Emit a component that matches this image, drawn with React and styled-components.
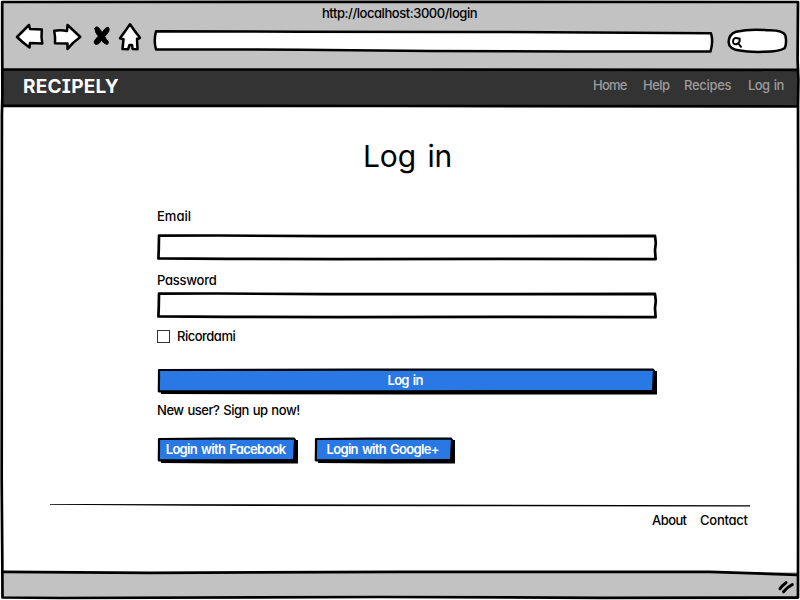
import React from "react";
import styled, { createGlobalStyle } from "styled-components";

const GlobalStyle = createGlobalStyle`
  *, *::before { box-sizing: border-box; }
  body { margin: 0; background: #fff; }
  button, input { font: inherit; letter-spacing: inherit; font-feature-settings: inherit; }
`;

const Window = styled.div`
  position: relative;
  display: flex;
  flex-direction: column;
  width: 800px;
  height: 600px;
  padding: 3px;
  overflow: hidden;
  background: #fff;
  color: #000;
  font: 450 13px/16px Inter, "Liberation Sans", sans-serif;
  font-feature-settings: "cv11", "ss03";
`;

const Drawing = styled.svg`
  position: absolute;
  inset: 0;
  width: 100%;
  height: 100%;
  overflow: visible;
  pointer-events: none;
  fill: ${(p) => p.$fill || "none"};
  stroke: #000;
  stroke-width: ${(p) => p.$weight || 2.7};
  stroke-linejoin: round;
  stroke-linecap: round;
`;

const Text = styled.span`
  position: relative;
  white-space: nowrap;
  letter-spacing: ${(p) => p.$track || 0}px;
  word-spacing: ${(p) => p.$words || 0}px;
  margin-right: ${(p) => -(p.$track || 0)}px;
`;

const Chrome = styled.header`
  display: flex;
  flex-direction: column;
  flex: 0 0 66px;
  background: #c2c2c2;
`;

const Address = styled.div`
  height: 20px;
  padding: 2px 0 0 319px;
`;

const Toolbar = styled.div`
  display: flex;
  align-items: flex-start;
  padding-left: 12px;
`;

const Icon = styled.svg`
  display: block;
  flex: none;
  width: ${(p) => p.$w}px;
  height: ${(p) => p.$h || 30}px;
  margin-left: ${(p) => p.$gap || 0}px;
  overflow: visible;
  fill: #fff;
  stroke: #000;
  stroke-width: 2.5;
  stroke-linejoin: round;
  stroke-linecap: round;
`;

const Nav = styled.nav`
  position: relative;
  display: flex;
  justify-content: space-between;
  flex: 0 0 38px;
  padding: 8px 13px 0 20px;
  background: #333;
`;

const Brand = styled.div`
  font-size: 19px;
  line-height: 20px;
  font-weight: 700;
  color: #fff;
  font-feature-settings: "cv08";
`;

const NavLinks = styled.div`
  display: flex;
  color: #9c9c9c;
  font-weight: 500;
`;

const NavLink = styled.a`
  width: ${(p) => p.$w}px;
  white-space: nowrap;
`;

const Page = styled.main`
  flex: 1;
  padding: 29px 47px 0;
`;

const Heading = styled.h1`
  margin: 0 0 32px 313px;
  font-size: 30px;
  line-height: 40px;
  font-weight: 400;
`;

const Form = styled.form`
  display: flex;
  flex-direction: column;
  width: 500px;
  margin-left: 107px;
`;

const Field = styled.label`
  display: flex;
  flex-direction: column;
  gap: ${(p) => p.$gap}px;
  margin-bottom: ${(p) => p.$after}px;
`;

const InputBox = styled.div`
  position: relative;
  height: 26px;
`;

const Input = styled.input`
  position: relative;
  width: 100%;
  height: 100%;
  padding: 0 8px;
  border: 0;
  background: transparent;
  outline: none;
`;

const Remember = styled.label`
  display: flex;
  align-items: center;
  gap: 7px;
  height: 16px;
  margin-bottom: 24px;
`;

const Checkbox = styled.input`
  appearance: none;
  width: 13px;
  height: 13px;
  margin: 0;
  border: 1px solid #333;
  background: #fff;
`;

const Button = styled.button`
  position: relative;
  width: ${(p) => p.$w}px;
  height: 26px;
  padding: 0 3px 2px 0;
  border: 0;
  background: transparent;
  color: #fff;
  font-weight: 600;
  line-height: 16px;
`;

const Signup = styled.p`
  margin: 8px 0 19px;
`;

const Socials = styled.div`
  display: flex;
  gap: 16px;
`;

const Rule = styled.div`
  position: relative;
  height: 3px;
  margin-top: 41px;
`;

const Footer = styled.footer`
  display: flex;
  justify-content: flex-end;
  gap: 13px;
  padding: 5px 2px 0 0;
`;

const StatusBar = styled.div`
  display: flex;
  justify-content: flex-end;
  flex: 0 0 25px;
  background: #c2c2c2;
`;

function InputFrame() {
  return (
    <Drawing $fill="#fff" viewBox="0 0 500 26">
      <path d="M2 1.6 L60 1.5 L170 2.2 L340 2.1 L498 1.9 L498.8 9 L498 16 L498.6 25.1 L340 24.8 L180 25.2 L70 24.8 L1.4 24.4 L1.8 14 Z" />
    </Drawing>
  );
}

function SketchButton({ width, children }) {
  const r = width - 3;
  return (
    <Button type="button" $w={width}>
      <Drawing $weight={2.2} viewBox={`0 0 ${width} 26`}>
        <path fill="#000" stroke="none" d={`M4 3 H${width} V26.4 H${width * 0.5} L4 26 Z`} />
        <path fill="#2a78e4" d={`M2 2 L${width * 0.4} 1.6 L${r - 1} 1.5 L${r} 3 L${r - 1} 22.9 L${width * 0.5} 23.4 L1.8 23.3 L2 10 Z`} />
      </Drawing>
      <Text $track={-0.7} $words={1.5}>{children}</Text>
    </Button>
  );
}

export default function App() {
  return (
    <>
      <GlobalStyle />
      <Window>
        <Chrome>
          <Address><Text $track={-0.45}>http://localhost:3000/login</Text></Address>
          <Toolbar>
            <Icon $w={30} viewBox="15 23 30 30">
              <path d="M17 37 Q23 31 29 25 L30 29 L41.8 29.5 Q41 37 42.3 43.5 Q36 43 30 43 L29.5 47.5 Q22 42 17 37Z" />
            </Icon>
            <Icon $w={30} $gap={7} viewBox="52 23 30 30">
              <path d="M54.2 30.8 Q61 29.8 67 31 L67.5 25 Q74 31 80.3 37 Q73 42 67.5 49 L67.5 43.5 L55 43.3 Q55.5 37 54.2 30.8Z" />
            </Icon>
            <Icon $w={20} $gap={9} viewBox="91 23 20 30">
              <path fill="#000" strokeWidth="0.8" d="M94.8 28.5 Q95.5 25.8 98.5 27.5 Q100.5 29.5 102 32.5 Q105 27.5 108 27 Q110 28.3 109 31 Q107 34.5 104.8 36.5 Q106 39.5 108 41 Q109.4 43.5 107 44.5 Q104 44 101.5 40.5 Q99 44.5 96 44.7 Q93.5 43.5 94.3 41 Q96 38 98.3 36.3 Q94.5 32 94.8 28.5Z" />
            </Icon>
            <Icon $w={26} $gap={6} viewBox="117 23 26 30">
              <path d="M130 24.3 Q134.5 31 140 37.8 L138 38.9 L137 38.8 L137.5 49.3 L132.7 49 L132 45 L129.5 45 L128 49.3 L122.5 49 L123.5 39.3 L120 38.3 Q125.5 31 130 24.3Z" />
            </Icon>
            <Icon $w={560} $gap={10} viewBox="153 23 560 30">
              <path d="M156 31.3 L300 31.7 L480 32 L590 32.4 L711 33.3 Q713.5 41 710.5 51.5 L570 51.4 L430 51 L300 49.7 L156 49.4 Q153.5 41 156 31.3Z" />
            </Icon>
            <Icon $w={60} $gap={14} viewBox="727 23 60 30">
              <path d="M736 31.7 Q750 28.7 767 30.2 Q784 29.7 785.5 36 Q787 44 784.5 48.3 Q779 51.8 764 51.8 Q748 52.2 740 50.6 Q728.8 49.3 728.6 42 Q729 34 736 31.7Z" />
              <path fill="none" strokeWidth="2" d="M739 38.7 Q734.5 36.6 733.2 40 Q732.2 44.4 736.5 44.3 Q740.3 42.8 739.6 38.5 M738.8 44 L741 46.8" />
            </Icon>
          </Toolbar>
        </Chrome>
        <Nav>
          <Brand><Text $track={0.25}>RECIPELY</Text></Brand>
          <NavLinks>
            <NavLink $w={50}><Text $track={-0.8}>Home</Text></NavLink>
            <NavLink $w={41}><Text $track={-0.5}>Help</Text></NavLink>
            <NavLink $w={64}><Text $track={-0.3}>Recipes</Text></NavLink>
            <NavLink $w={36}><Text $track={-0.55} $words={1.2}>Log in</Text></NavLink>
          </NavLinks>
        </Nav>
        <Page>
          <Heading><Text $track={-0.1} $words={3}>Log in</Text></Heading>
          <Form>
            <Field $gap={10} $after={12}>
              <Text>Email</Text>
              <InputBox><InputFrame /><Input type="text" /></InputBox>
            </Field>
            <Field $gap={4} $after={10}>
              <Text $track={-0.25}>Password</Text>
              <InputBox><InputFrame /><Input type="password" /></InputBox>
            </Field>
            <Remember><Checkbox type="checkbox" /><Text $track={-0.5}>Ricordami</Text></Remember>
            <SketchButton width={500}>Log in</SketchButton>
            <Signup><Text $track={-0.45} $words={0.7}>New user? Sign up now!</Text></Signup>
            <Socials>
              <SketchButton width={141}>Login with Facebook</SketchButton>
              <SketchButton width={141}>Login with Google+</SketchButton>
            </Socials>
          </Form>
          <Rule>
            <Drawing viewBox="0 0 700 3">
              <path fill="#000" stroke="none" d="M0 0 L10 0 L700 1.2 L700 2.5 L400 2.3 L140 1.8 L0 0.8Z" />
            </Drawing>
          </Rule>
          <Footer><Text $track={-0.6}>About</Text><Text $track={-0.25}>Contact</Text></Footer>
        </Page>
        <StatusBar>
          <Icon $w={21} $h={25} viewBox="776 572 21 25">
            <path strokeWidth="3" fill="none" d="M780 588.8 Q782 585.5 786 582.7 M783.5 591.8 Q787.5 586.8 792.3 584.6" />
          </Icon>
        </StatusBar>
        <Drawing $weight={2.7} viewBox="0 0 800 600">
          <path d="M2.2 2 L400 1.8 L798 2 L797.6 60 L798.4 80 L798 105 L798.2 350 L798 597.6 L600 597.8 L380 597 L60 598 L2.5 597.5 L2.3 560 L1.7 480 L1.9 115 L2.4 95 L2.2 40Z" />
          <path d="M3 69.5 L400 69.5 L797 69.8 M3 105.8 L400 106 L797 106.5" />
          <path d="M3 571.9 L150 572.8 L400 571.8 L710 571.9 L797 574.8" />
        </Drawing>
      </Window>
    </>
  );
}
